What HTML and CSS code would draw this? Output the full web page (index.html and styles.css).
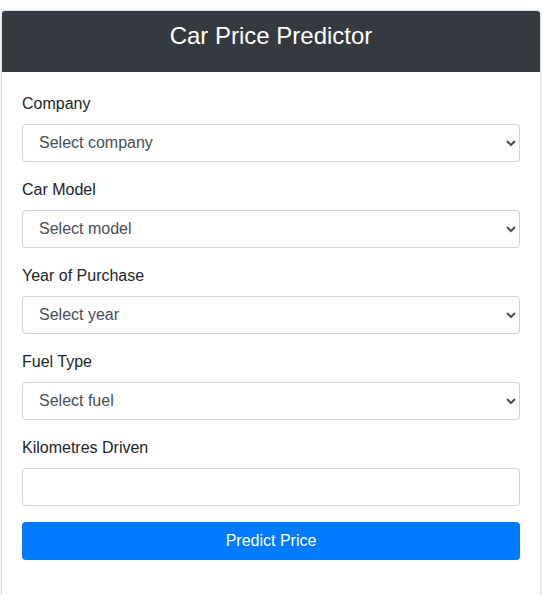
FILE: index.html
```html
<!DOCTYPE html>
<html lang="en">
<head>
    <meta charset="UTF-8">
    <meta name="viewport" content="width=device-width, initial-scale=1.0">
    <title>Car Price Predictor</title>
    <link rel="stylesheet" href="styles.css">
</head>
<body>
    <div class="wrapper">
        <div class="card">
            <div class="card-header">
                <h2>Car Price Predictor</h2>
            </div>
            <div class="card-body">
                <form id="predictForm">
                    <div class="form-group">
                        <label for="company">Company</label>
                        <select id="company" class="form-control">
                            <option value="">Select company</option>
                        </select>
                    </div>
                    <div class="form-group">
                        <label for="car_model">Car Model</label>
                        <select id="car_model" class="form-control">
                            <option value="">Select model</option>
                        </select>
                    </div>
                    <div class="form-group">
                        <label for="year">Year of Purchase</label>
                        <select id="year" class="form-control">
                            <option value="">Select year</option>
                        </select>
                    </div>
                    <div class="form-group">
                        <label for="fuel_type">Fuel Type</label>
                        <select id="fuel_type" class="form-control">
                            <option value="">Select fuel</option>
                        </select>
                    </div>
                    <div class="form-group">
                        <label for="kilo_driven">Kilometres Driven</label>
                        <input type="text" id="kilo_driven" class="form-control">
                    </div>
                    <button type="submit" class="btn">Predict Price</button>
                </form>
            </div>
        </div>
    </div>
</body>
</html>
```

FILE: styles.css
```css
body {
    font-family: "Liberation Sans", Arial, sans-serif;
    margin: 0;
    padding: 0;
    background: #fff;
    color: #212529;
}
.wrapper {
    padding: 10px 2px 0 1px;
}
.card {
    border: 1px solid rgba(0, 0, 0, 0.125);
    border-radius: 4px;
    box-shadow: 0 0 3px rgba(0, 0, 0, 0.12);
    background: #fff;
}
.card-header {
    background: #343a40;
    color: #fff;
    height: 61px;
    box-sizing: border-box;
    padding-top: 10px;
    text-align: center;
    border-radius: 3px 3px 0 0;
}
.card-header h2 {
    margin: 0;
    font-size: 24px;
    line-height: 29px;
    font-weight: 400;
}
.card-body {
    padding: 20px 20px 50px;
}
.form-group {
    margin-bottom: 16px;
}
label {
    display: block;
    font-size: 16px;
    line-height: 24px;
    margin-bottom: 8px;
}
.form-control {
    display: block;
    width: 100%;
    height: 38px;
    padding: 5px 12px 7px;
    font-family: inherit;
    font-size: 16px;
    color: #495057;
    background: #fff;
    border: 1px solid #ced4da;
    border-radius: 4px;
    box-sizing: border-box;
}
.btn {
    display: block;
    width: 100%;
    height: 38px;
    background: #007bff;
    color: #fff;
    font-family: inherit;
    font-size: 16px;
    border: none;
    border-radius: 4px;
    cursor: pointer;
}
```
